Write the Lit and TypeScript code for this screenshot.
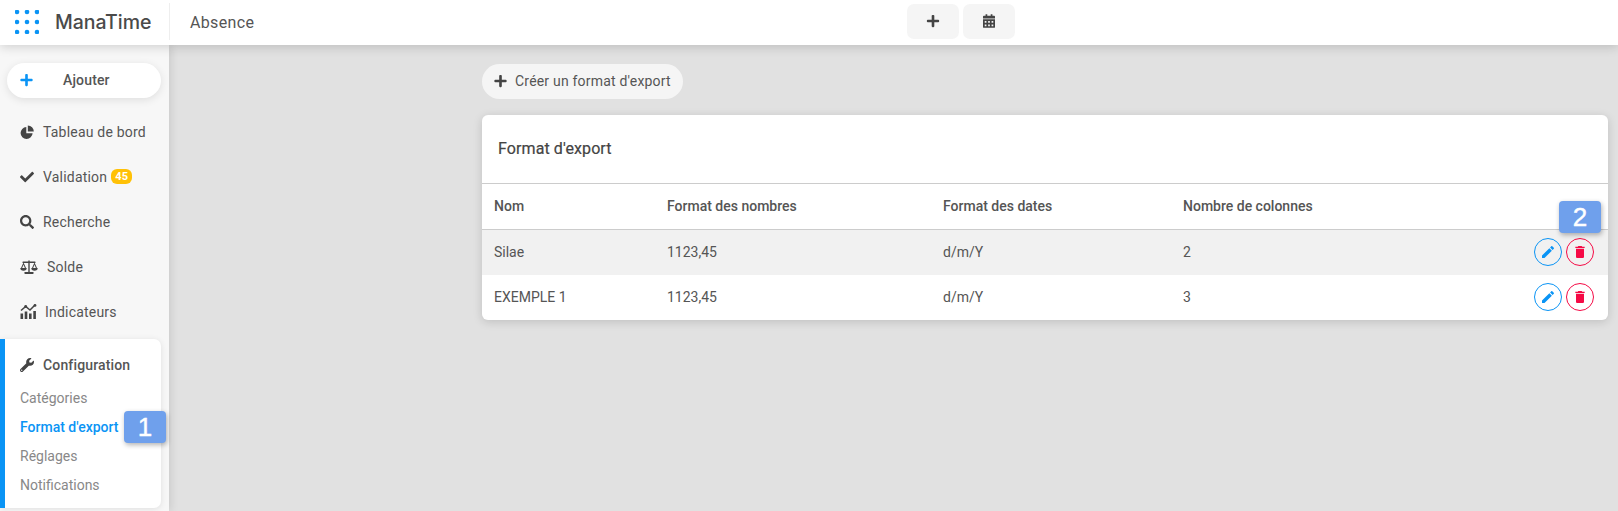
import { LitElement, html, css, svg } from "lit";
import { customElement } from "lit/decorators.js";

const ic = (vb: string, d: string, cls = "") =>
  html`<svg class="ic ${cls}" viewBox=${vb} fill="currentColor"><path d=${d}></path></svg>`;

const PLUS = "M416 208H272V64c0-17.67-14.33-32-32-32h-32c-17.67 0-32 14.33-32 32v144H32c-17.67 0-32 14.33-32 32v32c0 17.67 14.33 32 32 32h144v144c0 17.67 14.33 32 32 32h32c17.67 0 32-14.33 32-32V304h144c17.67 0 32-14.33 32-32v-32c0-17.67-14.33-32-32-32z";
const CHECK = "M173.898 439.404l-166.4-166.4c-9.997-9.997-9.997-26.206 0-36.204l36.203-36.204c9.997-9.998 26.207-9.998 36.204 0L192 312.69 432.095 72.596c9.997-9.997 26.207-9.997 36.204 0l36.203 36.204c9.997 9.997 9.997 26.206 0 36.204l-294.4 294.401c-9.998 9.997-26.207 9.997-36.204-.001z";
const SEARCH = "M505 442.7L405.3 343c-4.5-4.5-10.6-7-17-7H372c27.6-35.3 44-79.7 44-128C416 93.1 322.9 0 208 0S0 93.1 0 208s93.1 208 208 208c48.3 0 92.7-16.4 128-44v16.3c0 6.4 2.5 12.5 7 17l99.7 99.7c9.4 9.4 24.6 9.4 33.9 0l28.3-28.3c9.4-9.4 9.4-24.6.1-34zM208 336c-70.7 0-128-57.2-128-128 0-70.7 57.2-128 128-128 70.7 0 128 57.2 128 128 0 70.7-57.2 128-128 128z";
const WRENCH = "M507.73 109.1c-2.24-9.03-13.54-12.09-20.12-5.51l-74.36 74.36-67.88-11.31-11.31-67.88 74.36-74.36c6.62-6.62 3.43-17.9-5.66-20.16-47.38-11.74-99.55.91-136.58 37.93-39.64 39.64-50.55 97.1-34.05 147.2L18.74 402.76c-24.99 24.99-24.99 65.51 0 90.5 24.99 24.99 65.51 24.99 90.5 0l213.21-213.21c50.12 16.71 107.47 5.68 147.37-34.22 37.07-37.07 49.7-89.32 37.91-136.73zM64 472c-13.25 0-24-10.75-24-24 0-13.26 10.75-24 24-24s24 10.74 24 24c0 13.25-10.75 24-24 24z";
const PIE = "M10.800 3.400a10.300 10.300 0 1 0 10.800 10.800H10.800zM13.400 1a10.300 10.300 0 0 1 10.300 10.300H13.400z";
const PENCIL = "M3 17.25V21h3.75L17.81 9.94l-3.75-3.75L3 17.25zM20.71 7.04c.39-.39.39-1.02 0-1.41l-2.34-2.34c-.39-.39-1.02-.39-1.41 0l-1.83 1.83 3.75 3.75 1.83-1.83z";
const TRASH = "M6 19c0 1.1.9 2 2 2h8c1.1 0 2-.9 2-2V7H6v12zM19 4h-3.5l-1-1h-5l-1 1H5v2h14V4z";

const dots = html`<svg class="dots" viewBox="0 0 24 24" fill="#0a94f5">
  ${[2, 12, 22].flatMap((y) => [2, 12, 22].map((x) => svg`<circle cx=${x} cy=${y} r="2.3"></circle>`))}
</svg>`;

const calendar = html`<svg class="ic cal" viewBox="0 0 14 16" fill="currentColor">
  <path fill-rule="evenodd" d="M3 0h2v2h4V0h2v2h2a1 1 0 0 1 1 1v2H0V3a1 1 0 0 1 1-1h2zM0 6h14v9a1 1 0 0 1-1 1H1a1 1 0 0 1-1-1zM2 8v2h2V8zm4 0v2h2V8zm4 0v2h2V8zM2 12v2h2v-2zm4 0v2h2v-2zm4 0v2h2v-2z"></path>
</svg>`;

const scale = html`<svg class="ic scale" viewBox="0 0 18 14" fill="currentColor">
  <rect x="8.300" y="0.500" width="1.400" height="11.500"></rect>
  <rect x="4.500" y="12" width="9" height="2" rx=".4"></rect>
  <rect x="2.500" y="1.400" width="13" height="1.600" rx=".5"></rect>
  <path d="M3.500 2.600 1 8h1.100l1.400-3.200L4.900 8H6zM14.500 2.600 12 8h1.100l1.400-3.200L15.900 8H17z"></path>
  <path d="M.3 8h6.400a3.200 2.800 0 0 1-6.400 0zM11.300 8h6.400a3.200 2.800 0 0 1-6.400 0z"></path>
</svg>`;

const chart = html`<svg class="ic chart" viewBox="0 0 17 15" fill="currentColor">
  <rect x="0.500" y="9.500" width="2.600" height="5.500"></rect>
  <rect x="4.700" y="7.500" width="2.600" height="7.500"></rect>
  <rect x="9" y="9.500" width="2.600" height="5.500"></rect>
  <rect x="13.300" y="7" width="2.600" height="8"></rect>
  <path d="M1 6.500 5.700 2.500 10 6 15 1" fill="none" stroke="currentColor" stroke-width="1.500"></path>
  <circle cx="5.700" cy="2.500" r="1.400"></circle><circle cx="15" cy="1.400" r="1.400"></circle>
</svg>`;

const rows = [
  ["Silae", "1123,45", "d/m/Y", "2"],
  ["EXEMPLE 1", "1123,45", "d/m/Y", "3"],
];

@customElement("app-root")
export class AppRoot extends LitElement {
  static styles = css`
    :host { display: block; position: relative; width: 1618px; height: 511px; overflow: hidden;
      background: #e1e1e1; font-family: Roboto, "Liberation Sans", sans-serif; font-size: 14px; color: #555; }
    .ic { display: block; flex: none; width: 14px; height: 14px; }
    header { position: relative; z-index: 3; display: flex; align-items: center; height: 45px; background: #fff;
      box-shadow: 0 2px 10px rgba(0,0,0,.16); }
    .brand { display: flex; align-items: center; gap: 16px; width: 170px; height: 37px; padding-left: 15px;
      box-sizing: border-box; border-right: 1px solid #eee; flex: none; margin-top: -2px; }
    .dots { width: 24px; height: 24px; flex: none; }
    .name { font-family: Inter, sans-serif; font-size: 19.500px; font-weight: 500; color: #4a4a4a; letter-spacing: -.05px; }
    .title { width: 737px; box-sizing: border-box; padding-left: 20px; font-size: 16px; letter-spacing: .35px; color: #555; flex: none; }
    .tools { display: flex; gap: 4px; margin-top: -3px; }
    .tool { width: 52px; height: 35px; border-radius: 7px; background: #f5f5f5; color: #444;
      display: flex; align-items: center; justify-content: center; }
    .tool .cal { width: 12px; height: 14px; }
    .body { display: flex; height: 466px; }
    aside { position: relative; z-index: 2; width: 169px; flex: none; background: #f7f7f7; box-shadow: 2px 0 8px rgba(0,0,0,.1);
      box-sizing: border-box; padding-top: 18px; }
    .add { display: flex; align-items: center; width: 154px; height: 35px; margin-left: 7px; border-radius: 18px; background: #fff;
      box-shadow: 0 2px 8px rgba(0,0,0,.1); color: #555; font-weight: 500; letter-spacing: .15px; box-sizing: border-box; padding: 0 0 2px 13px; }
    .add .ic { color: #0a94f5; width: 13px; height: 14px; margin-right: 30px; }
    nav { display: flex; flex-direction: column; margin-top: 11px; }
    .item { display: flex; align-items: center; height: 45px; padding-left: 20px; color: #555; gap: 9px; letter-spacing: .2px; }
    .item .ic { color: #444; }
    .item .scale { width: 18px; height: 14px; margin-right: 0; }
    .item .chart { width: 17px; height: 15px; margin-right: -1px; }
    .badge { background: #ffc107; color: #fff; font-size: 11px; font-weight: 700; border-radius: 6px; padding: 1px 4px; margin-left: -5px; line-height: 13px; }
    .config { margin-top: 5px; width: 161px; height: 169px; box-sizing: border-box; background: #fff; border-left: 5px solid #0a94f5;
      border-radius: 0 7px 7px 0; box-shadow: 0 1px 6px rgba(0,0,0,.1); padding: 14px 0 0 15px; }
    .config-h { display: flex; align-items: center; gap: 9px; font-weight: 500; letter-spacing: .15px; color: #555; height: 24px; margin-bottom: 7px; }
    .config-h .ic { color: #444; }
    .sub { height: 29px; line-height: 29px; color: #888; }
    .sub.on { color: #0a94f5; font-weight: 500; }
    main { flex: 1; box-sizing: border-box; padding: 19px 10px 0 313px; }
    .create { display: inline-flex; align-items: center; gap: 8px; height: 35px; width: 201px; box-sizing: border-box; padding: 0 0 2px 12px;
      border-radius: 18px; background: #f5f5f5; color: #555; letter-spacing: .2px; }
    .create .ic { color: #444; width: 13px; height: 14px; }
    .card { margin-top: 16px; background: #fff; border-radius: 6px; box-shadow: 0 2px 10px rgba(0,0,0,.15); }
    .card-h { height: 69px; box-sizing: border-box; display: flex; align-items: center; padding: 0 16px 2px 16px; font-size: 16px; font-weight: 400; letter-spacing: .1px; color: #444; border-bottom: 1px solid #ccc; -webkit-text-stroke: .2px #444; }
    .row { display: grid; grid-template-columns: 173px 276px 240px 1fr auto; align-items: center; padding: 0 14px 1px 12px; height: 45px; box-sizing: border-box; }
    .row.head { font-weight: 500; height: 46px; padding-bottom: 2px; border-bottom: 1px solid #ccc; }
    .row.alt { background: #f1f1f1; }
    .acts { display: flex; gap: 4px; }
    .act { width: 28px; height: 28px; box-sizing: border-box; border-radius: 50%; border: 1px solid; display: flex; align-items: center; justify-content: center; }
    .act.e { color: #0a94f5; } .act.d { color: #f50a45; }
    .act .ic { width: 16px; height: 16px; }
    .tag { position: absolute; z-index: 5; width: 42px; height: 32px; border-radius: 4px; background: #6fa0ec; color: #fff;
      font-family: "Liberation Sans", Arial, sans-serif; font-size: 26px; display: flex; align-items: center; justify-content: center;
      box-shadow: 1px 2px 5px rgba(0,0,0,.3); -webkit-text-stroke: .4px #fff; }
    .t1 { left: 124px; top: 411px; }
    .t2 { left: 1559px; top: 201px; }
  `;

  render() {
    return html`
      <header>
        <div class="brand">${dots}<span class="name">ManaTime</span></div>
        <div class="title">Absence</div>
        <div class="tools">
          <div class="tool">${ic("0 0 448 512", PLUS)}</div>
          <div class="tool">${calendar}</div>
        </div>
      </header>
      <div class="body">
        <aside>
          <div class="add">${ic("0 0 448 512", PLUS)}Ajouter</div>
          <nav>
            <div class="item">${ic("0 0 24 24", PIE)}Tableau de bord</div>
            <div class="item">${ic("0 0 512 512", CHECK)}Validation <span class="badge">45</span></div>
            <div class="item">${ic("0 0 512 512", SEARCH)}Recherche</div>
            <div class="item">${scale}Solde</div>
            <div class="item">${chart}Indicateurs</div>
          </nav>
          <div class="config">
            <div class="config-h">${ic("0 0 512 512", WRENCH)}Configuration</div>
            <div class="sub">Catégories</div>
            <div class="sub on">Format d'export</div>
            <div class="sub">Réglages</div>
            <div class="sub">Notifications</div>
          </div>
        </aside>
        <main>
          <div class="create">${ic("0 0 448 512", PLUS)}Créer un format d'export</div>
          <div class="card">
            <div class="card-h">Format d'export</div>
            <div class="row head"><span>Nom</span><span>Format des nombres</span><span>Format des dates</span><span>Nombre de colonnes</span><span></span></div>
            ${rows.map((r, i) => html`
              <div class="row ${i === 0 ? "alt" : ""}">
                ${r.map((c) => html`<span>${c}</span>`)}
                <div class="acts">
                  <div class="act e">${ic("0 0 24 24", PENCIL)}</div>
                  <div class="act d">${ic("0 0 24 24", TRASH)}</div>
                </div>
              </div>`)}
          </div>
        </main>
      </div>
      <div class="tag t1">1</div>
      <div class="tag t2">2</div>
    `;
  }
}
